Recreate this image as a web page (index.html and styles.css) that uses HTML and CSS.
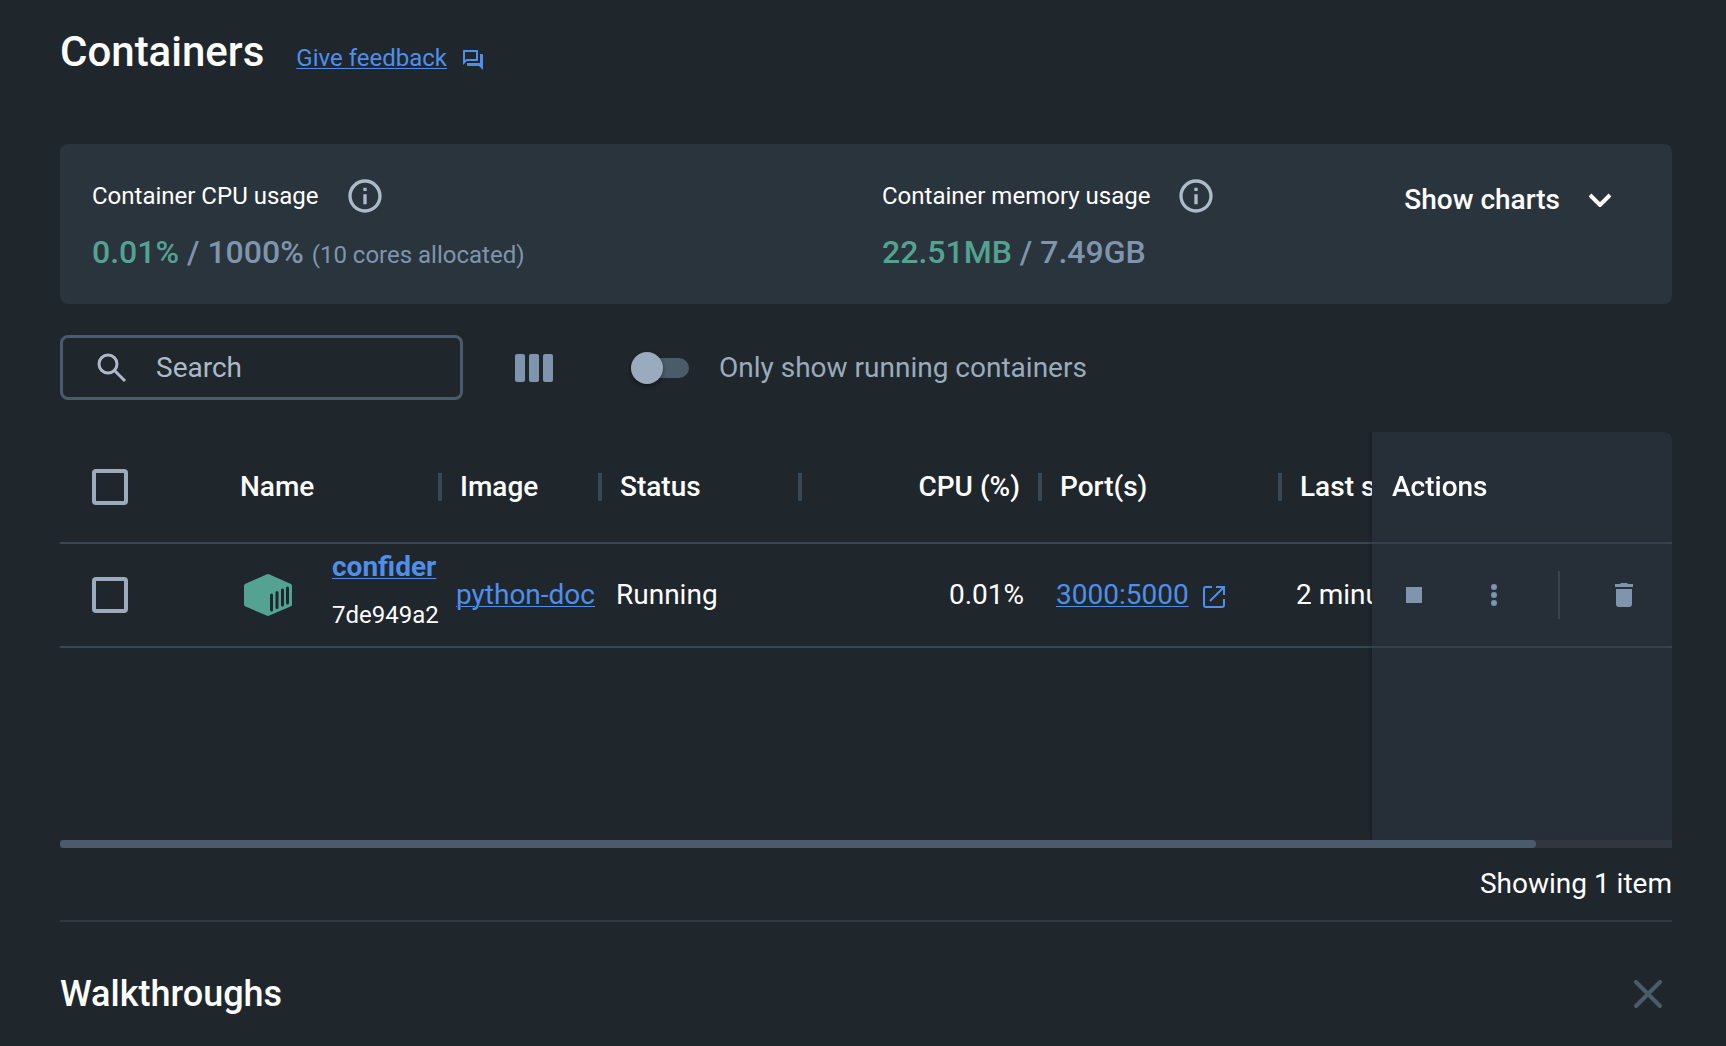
FILE: index.html
```html
<!DOCTYPE html>
<html lang="en">
<head>
<meta charset="utf-8">
<meta name="viewport" content="width=device-width, initial-scale=1">
<title>Containers</title>
<link rel="stylesheet" href="styles.css">
</head>
<body>
<main class="page">
  <header class="page-header">
    <h1 class="page-title">Containers</h1>
    <a class="feedback" href="#feedback"><span class="feedback-text">Give feedback</span>
      <svg class="icon-feedback" viewBox="0 0 24 24" aria-hidden="true"><path d="M15 4v7H5.17L4 12.17V4h11m1-2H3c-.55 0-1 .45-1 1v14l4-4h10c.55 0 1-.45 1-1V3c0-.55-.45-1-1-1zm5 4h-2v9H6v2c0 .55.45 1 1 1h11l4 4V7c0-.55-.45-1-1-1z"/></svg>
    </a>
  </header>

  <section class="usage" aria-label="Resource usage">
    <div class="metric">
      <div class="metric-label">Container CPU usage
        <svg class="icon-info" viewBox="0 0 24 24" aria-hidden="true"><path d="M11 7h2v2h-2zm0 4h2v6h-2zm1-9C6.48 2 2 6.48 2 12s4.480 10 10 10 10-4.480 10-10S17.520 2 12 2zm0 18c-4.410 0-8-3.590-8-8s3.590-8 8-8 8 3.590 8 8-3.590 8-8 8z"/></svg>
      </div>
      <div class="metric-value"><span class="used">0.01%</span> / 1000% <span class="note">(10 cores allocated)</span></div>
    </div>
    <div class="metric">
      <div class="metric-label">Container memory usage
        <svg class="icon-info" viewBox="0 0 24 24" aria-hidden="true"><path d="M11 7h2v2h-2zm0 4h2v6h-2zm1-9C6.48 2 2 6.48 2 12s4.480 10 10 10 10-4.480 10-10S17.520 2 12 2zm0 18c-4.410 0-8-3.590-8-8s3.590-8 8-8 8 3.590 8 8-3.590 8-8 8z"/></svg>
      </div>
      <div class="metric-value"><span class="used">22.51MB</span> / 7.49GB</div>
    </div>
    <button class="charts-toggle" type="button">Show charts
      <svg class="icon-chevron" viewBox="0 0 24 14" aria-hidden="true"><path d="M2 2l10 10L22 2"/></svg>
    </button>
  </section>

  <div class="toolbar">
    <label class="search">
      <svg class="icon-search" viewBox="0 0 30 30" aria-hidden="true"><circle cx="11" cy="11" r="9"/><path d="M17 17l11 11"/></svg>
      <input class="search-input" type="search" placeholder="Search" aria-label="Search">
    </label>
    <button class="columns-button" type="button" aria-label="Choose columns">
      <svg class="icon-columns" viewBox="0 0 38 28" aria-hidden="true"><rect width="10" height="28" rx="2"/><rect x="14" width="10" height="28" rx="2"/><rect x="28" width="10" height="28" rx="2"/></svg>
    </button>
    <label class="running-filter">
      <input class="switch" type="checkbox" role="switch">
      <span>Only show running containers</span>
    </label>
  </div>

  <div class="table-scroll">
    <table class="containers">
      <colgroup><col class="col-check"><col class="col-name"><col class="col-image"><col class="col-status"><col class="col-cpu"><col class="col-ports"><col class="col-started"><col class="col-actions"></colgroup>
      <thead>
        <tr>
          <th class="check-cell"><input class="checkbox" type="checkbox" aria-label="Select all containers"></th>
          <th class="divided">Name</th>
          <th class="divided">Image</th>
          <th class="divided">Status</th>
          <th class="divided numeric">CPU (%)</th>
          <th class="divided">Port(s)</th>
          <th>Last started</th>
          <th class="actions-cell">Actions</th>
        </tr>
      </thead>
      <tbody>
        <tr>
          <td class="check-cell"><input class="checkbox" type="checkbox" aria-label="Select confider"></td>
          <td class="name-cell">
            <div class="container-name">
              <svg class="icon-container" viewBox="0 0 48 42" aria-hidden="true"><path class="box" d="M22.500.4q1.500-.6 3 0L47 10q1 .6 1 2v18.500q0 1.200-1 1.700L25.500 41.600q-1.500.6-3 0L1 32.200q-1-.5-1-1.700V12q0-1.400 1-2z"/><path class="slat" d="M27.500 21v15M33 18.500v15M38.500 16v15M43.500 14v15"/></svg>
              <div class="name-lines"><a class="name-link" href="#confider">confider</a><span class="container-id">7de949a2</span></div>
            </div>
          </td>
          <td><a href="#image">python-doc</a></td>
          <td>Running</td>
          <td class="numeric">0.01%</td>
          <td><div class="port"><a href="#port">3000:5000</a>
            <svg class="icon-open" viewBox="0 0 22 22" aria-hidden="true"><path d="M9 1H3Q1 1 1 3v16q0 2 2 2h16q2 0 2-2v-6M13 1h8v8M20 2L7 15"/></svg></div></td>
          <td>2 minutes ago</td>
          <td class="actions-cell">
            <div class="actions">
              <button class="action" type="button" aria-label="Stop"><svg class="icon-action" viewBox="0 0 24 24" aria-hidden="true"><path d="M4 4h16v16H4z"/></svg></button>
              <button class="action" type="button" aria-label="More actions"><svg class="icon-action" viewBox="0 0 24 24" aria-hidden="true"><circle cx="12" cy="4" r="3"/><circle cx="12" cy="12" r="3"/><circle cx="12" cy="20" r="3"/></svg></button>
              <span class="action-divider"></span>
              <button class="action" type="button" aria-label="Delete"><svg class="icon-action" viewBox="0 0 24 24" aria-hidden="true"><path d="M3 1h5l1-1h6l1 1h5v3H3zM4 6h16v15q0 3-3 3H7q-3 0-3-3z"/></svg></button>
            </div>
          </td>
        </tr>
        <tr class="empty-row"><td colspan="7"></td><td class="actions-cell"></td></tr>
      </tbody>
    </table>
  </div>
  <div class="scroll-track"><div class="scroll-thumb"></div></div>
  <p class="item-count">Showing 1 item</p>

  <section class="walkthroughs">
    <h2 class="walkthroughs-title">Walkthroughs</h2>
    <button class="close-button" type="button" aria-label="Close walkthroughs"><svg class="icon-close" viewBox="0 0 28 28" aria-hidden="true"><path d="M2 2l24 24M26 2L2 26"/></svg></button>
  </section>
</main>
</body>
</html>
```
FILE: styles.css
```css
:root {
  --bg: #1f262c;
  --card: #2a343c;
  --panel: #262f37;
  --line: #394753;
  --muted: #7f94ad;
  --soft: #9aabbd;
  --slate: #4a5c6c;
  --blue: #4f8fea;
  --green: #54a292;
}

* { box-sizing: border-box; }

body {
  margin: 0;
  background: var(--bg);
  color: #fff;
  font: 400 28px/32px Roboto, sans-serif;
}

button {
  padding: 0;
  border: 0;
  background: none;
  color: inherit;
  font: inherit;
  cursor: pointer;
}

a {
  color: var(--blue);
  text-decoration-thickness: 1px;
  text-underline-offset: 2px;
}

svg {
  display: block;
  flex: none;
  fill: currentColor;
}

.page { padding: 28px 54px 0 60px; }

.page-header {
  display: flex;
  align-items: baseline;
  gap: 32px;
  height: 48px;
  margin-bottom: 68px;
}

.page-title {
  margin: 0;
  font-size: 42px;
  font-weight: 500;
  line-height: 48px;
}

.feedback {
  display: flex;
  align-items: center;
  gap: 14px;
  font-size: 24px;
  text-decoration: none;
}

.feedback-text {
  text-decoration: underline 1px;
  text-underline-offset: 2px;
}

.icon-feedback {
  width: 24px;
  height: 24px;
  margin-top: 4px;
}

.usage {
  display: grid;
  grid-template-columns: 790px 1fr auto;
  align-items: start;
  min-height: 160px;
  padding: 32px 60px 0 32px;
  border-radius: 8px;
  background: var(--card);
}

.metric-label {
  display: flex;
  align-items: center;
  gap: 26px;
  font-size: 24px;
  line-height: 40px;
}

.icon-info {
  width: 40px;
  height: 40px;
  color: #acbaca;
}

.metric-value {
  margin-top: 16px;
  color: var(--muted);
  font-size: 32px;
  font-weight: 500;
  line-height: 40px;
}

.used { color: var(--green); }

.note {
  font-size: 24px;
  font-weight: 400;
}

.charts-toggle {
  display: flex;
  align-items: center;
  gap: 28px;
  padding-top: 8px;
  font-weight: 500;
}

.icon-chevron {
  width: 24px;
  height: 14px;
  fill: none;
  stroke: currentColor;
  stroke-width: 4;
}

.toolbar {
  display: flex;
  align-items: center;
  height: 65px;
  margin: 31px 0 32px;
}

.search {
  display: flex;
  align-items: center;
  gap: 29px;
  width: 403px;
  height: 65px;
  padding: 0 32px 0 34px;
  border: 3px solid var(--slate);
  border-radius: 8px;
}

.icon-search {
  width: 30px;
  height: 30px;
  color: #acbaca;
  fill: none;
  stroke: currentColor;
  stroke-width: 3;
}

.search-input {
  flex: 1;
  min-width: 0;
  padding: 0;
  border: 0;
  outline: 0;
  background: none;
  color: #fff;
  font: inherit;
}

.search-input::placeholder { color: #acbaca; }

.columns-button {
  margin-left: 52px;
  color: var(--muted);
}

.icon-columns {
  width: 38px;
  height: 28px;
}

.running-filter {
  display: flex;
  align-items: center;
  gap: 30px;
  margin-left: 78px;
  color: var(--soft);
}

.switch {
  display: flex;
  align-items: center;
  appearance: none;
  width: 58px;
  height: 20px;
  margin: 0;
  border-radius: 10px;
  background: var(--slate);
}

.switch::before {
  content: "";
  width: 32px;
  height: 32px;
  border-radius: 50%;
  background: var(--soft);
  box-shadow: 0 2px 4px rgb(0 0 0 / 40%);
}

.switch:checked { justify-content: flex-end; }

.table-scroll {
  overflow-x: auto;
  scrollbar-width: none;
}

.containers {
  width: 100%;
  min-width: 1760px;
  border-spacing: 0;
  table-layout: fixed;
}

.col-check { width: 160px; }
.col-name { width: 220px; }
.col-image { width: 160px; }
.col-status { width: 200px; }
.col-cpu,
.col-ports { width: 240px; }
.col-actions { width: 300px; }

th,
td {
  height: 104px;
  padding: 0 16px;
  border-bottom: 2px solid var(--line);
  overflow: hidden;
  text-align: left;
  white-space: nowrap;
}

th {
  height: 112px;
  padding: 0 20px;
  font-weight: 500;
}

/* Each column boundary carries a 4px handle, half in each neighbouring cell. */
.divided {
  background: linear-gradient(var(--line), var(--line)) right center / 2px 28px no-repeat;
}

.divided + th {
  background:
    linear-gradient(var(--line), var(--line)) right center / 2px 28px no-repeat,
    linear-gradient(var(--line), var(--line)) left center / 2px 28px no-repeat;
}

.divided + th:not(.divided) {
  background: linear-gradient(var(--line), var(--line)) left center / 2px 28px no-repeat;
}

.numeric { text-align: right; }

.check-cell { padding: 0 32px; }

.checkbox {
  display: block;
  appearance: none;
  width: 36px;
  height: 36px;
  margin: 0;
  border: 4px solid var(--soft);
  border-radius: 4px;
}

.name-cell { padding: 0 0 8px 24px; }

.container-name {
  display: flex;
  align-items: center;
  gap: 40px;
}

.icon-container {
  width: 48px;
  height: 42px;
  margin-top: 8px;
}

.box { fill: var(--green); }

.slat {
  stroke: var(--bg);
  stroke-width: 3;
  stroke-linecap: round;
}

.name-lines {
  display: flex;
  flex-direction: column;
  gap: 16px;
}

.name-link { font-weight: 700; }

.container-id { font-size: 24px; }

.port {
  display: flex;
  align-items: center;
  gap: 14px;
}

.icon-open {
  width: 22px;
  height: 22px;
  margin-top: 4px;
  color: var(--blue);
  fill: none;
  stroke: currentColor;
  stroke-width: 2;
}

.actions-cell {
  position: sticky;
  right: 0;
  background: var(--panel);
  box-shadow: -1px 0 4px rgb(0 0 0 / 20%);
}

th.actions-cell { border-top-right-radius: 8px; }

.actions {
  display: grid;
  grid-template-columns: 80px 1fr auto auto;
  align-items: center;
  padding: 0 20px 0 14px;
}

.action {
  justify-self: start;
  color: var(--muted);
}

.icon-action {
  width: 24px;
  height: 24px;
}

.action-divider {
  width: 2px;
  height: 48px;
  margin-right: 52px;
  background: #3a424b;
}

.empty-row td {
  height: 192px;
  border: 0;
}

.scroll-track { background: #31373f; }

.scroll-thumb {
  width: calc(100% * 1476 / 1612);
  height: 8px;
  border-radius: 4px;
  background: var(--slate);
}

.item-count {
  margin: 0;
  padding: 20px 0;
  border-bottom: 2px solid #32383f;
  text-align: right;
}

.walkthroughs {
  display: flex;
  align-items: center;
  justify-content: space-between;
  padding: 48px 10px 24px 0;
}

.walkthroughs-title {
  margin: 0;
  font-size: 36px;
  font-weight: 500;
  line-height: 48px;
}

.icon-close {
  width: 28px;
  height: 28px;
  color: var(--slate);
  fill: none;
  stroke: currentColor;
  stroke-width: 4;
  stroke-linecap: round;
}
```
